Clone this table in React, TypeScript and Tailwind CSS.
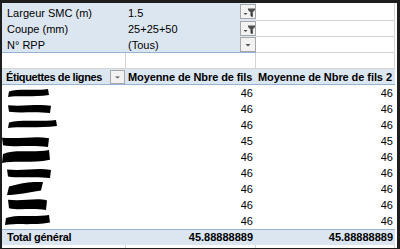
import React from "react";

const FONT = { fontFamily: "'Liberation Sans', Arial, sans-serif" };

function FilterBtn({ kind }: { kind: "filter" | "arrow" }) {
  return (
    <div className="w-[16px] h-[15px] border border-[#a6a6a6] bg-[#f2f2f2] flex items-center justify-center shrink-0">
      {kind === "filter" ? (
        <svg width="14" height="13" viewBox="0 0 14 13">
          <polygon points="2.5,8 6.5,8 4.5,10" fill="#4a4a4a" />
          <polygon points="7,3.5 14,3.5 14,5 11.5,7.5 11.5,12 9.5,11 9.5,7.5 7,5" fill="#4f4f4f" />
          <polygon points="11.5,7.5 11.5,12 10.5,11.5 10.5,8" fill="#222" />
        </svg>
      ) : (
        <svg width="14" height="13" viewBox="0 0 14 13">
          <polygon points="4.5,6 9.5,6 7,8.5" fill="#505050" />
        </svg>
      )}
    </div>
  );
}

function Blob({ x, w, y, h, v }: { x: number; w: number; y: number; h: number; v: number }) {
  const paths = [
    `M1 ${h * 0.3} C${w * 0.3} ${-h * 0.1}, ${w * 0.6} ${h * 0.25}, ${w - 1} 0 L${w} ${h * 0.75} C${w * 0.6} ${h * 1.05}, ${w * 0.3} ${h * 0.8}, 0 ${h} Z`,
    `M0 ${h * 0.15} C${w * 0.4} ${h * 0.3}, ${w * 0.7} ${-h * 0.05}, ${w} ${h * 0.2} L${w - 1} ${h} C${w * 0.6} ${h * 0.8}, ${w * 0.3} ${h * 1.05}, 1 ${h * 0.85} Z`,
    `M2 ${h * 0.35} C${w * 0.35} ${h * 0.1}, ${w * 0.7} ${-h * 0.05}, ${w} 0 L${w - 2} ${h * 0.65} C${w * 0.6} ${h * 0.8}, ${w * 0.3} ${h}, 0 ${h} Z`,
  ];
  return (
    <svg
      width={w}
      height={h}
      viewBox={`0 0 ${w} ${h}`}
      style={{ marginLeft: x, marginTop: y }}
      className="block shrink-0"
    >
      <path d={paths[v % 3]} fill="#000" />
    </svg>
  );
}

const blobs = [
  { x: 6, w: 41, y: 4, h: 8, v: 0 },
  { x: 6, w: 43, y: 3, h: 9, v: 1 },
  { x: 6, w: 49, y: 3, h: 8, v: 0 },
  { x: 0, w: 47, y: 3, h: 11, v: 1 },
  { x: 0, w: 48, y: 1, h: 13, v: 0 },
  { x: 5, w: 44, y: 3, h: 10, v: 1 },
  { x: 5, w: 36, y: 1, h: 13, v: 2 },
  { x: 6, w: 39, y: 1, h: 12, v: 1 },
  { x: 3, w: 45, y: 2, h: 10, v: 0 },
];
const vals = ["46", "46", "46", "45", "46", "46", "46", "46", "46"];

export default function App() {
  const filters = [
    { label: "Largeur SMC (m)", val: "1.5", kind: "filter" as const },
    { label: "Coupe (mm)", val: "25+25+50", kind: "filter" as const },
    { label: "N° RPP", val: "(Tous)", kind: "arrow" as const },
  ];
  return (
    <div
      className="w-[400px] h-[249px] bg-[#1e1e1e] pt-[3px] pl-[2px] pr-[3px] pb-[1px] overflow-hidden text-[11px] leading-[11px] text-black"
      style={FONT}
    >
      <div className="bg-white w-[395px] h-[245px] flex flex-col">
        {/* filter rows */}
        {filters.map((r, i) => {
          const last = i === 2;
          const h = i === 0 ? "h-[18px]" : "h-[16px]";
          const pb = last ? "pb-[1px]" : "pb-[2px]";
          return (
            <div key={i} className={`flex ${h}`}>
              <div
                className={`w-[124px] bg-[#dce6f1] flex items-end pl-[5px] ${pb} ${last ? "border-b border-[#95b3d7]" : ""}`}
              >
                <span className="whitespace-nowrap">{r.label}</span>
              </div>
              <div
                className={`w-[130px] bg-[#dce6f1] flex justify-between ${last ? "border-b border-[#95b3d7]" : ""}`}
              >
                <div className={`flex items-end pl-[2px] ${pb}`}>
                  <span className="whitespace-nowrap">{r.val}</span>
                </div>
                <div className={i === 0 ? "mt-[1px]" : ""}>
                  <FilterBtn kind={r.kind} />
                </div>
              </div>
              <div className="w-[139px] border-b border-r border-[#d4d4d4]" />
              <div className="w-[2px]" />
            </div>
          );
        })}
        {/* empty row */}
        <div className="flex h-[16px]">
          <div className="w-[124px] border-b border-r border-[#d4d4d4]" />
          <div className="w-[130px] border-b border-r border-[#d4d4d4]" />
          <div className="w-[139px] border-b border-r border-[#d4d4d4]" />
          <div className="w-[2px]" />
        </div>
        {/* header */}
        <div className="flex h-[16px] font-bold">
          <div className="w-[124px] bg-[#dce6f1] border-b border-[#95b3d7] flex justify-between pl-[4px] pr-[1px]">
            <div className="flex items-end pb-[1px]">
              <span className="whitespace-nowrap tracking-[-0.4px]">Étiquettes de lignes</span>
            </div>
            <div className="mt-[1px] w-[15px] h-[14px] border border-[#a6a6a6] bg-[#f2f2f2] flex items-center justify-center">
              <svg width="9" height="5" viewBox="0 0 9 5">
                <polygon points="2,1.5 7,1.5 4.5,3.5" fill="#555" />
              </svg>
            </div>
          </div>
          <div className="w-[130px] bg-[#dce6f1] border-b border-[#95b3d7] flex items-end pb-[1px] pl-[2px]">
            <span className="whitespace-nowrap tracking-[-0.1px]">Moyenne de Nbre de fils</span>
          </div>
          <div className="w-[139px] bg-[#dce6f1] border-b border-[#95b3d7] flex items-end pb-[1px] pl-[2px]">
            <span className="whitespace-nowrap tracking-[-0.07px]">Moyenne de Nbre de fils 2</span>
          </div>
          <div className="w-[2px]" />
        </div>
        {/* data rows */}
        {vals.map((v, i) => (
          <div key={i} className="flex h-[16px]">
            <div className="w-[124px] flex items-start">
              <Blob {...blobs[i]} />
            </div>
            <div className="w-[130px] flex items-end justify-end pb-[2px] pr-[3px]">
              <span>{v}</span>
            </div>
            <div className="w-[139px] flex items-end justify-end pb-[2px] pr-[2px]">
              <span>{v}</span>
            </div>
            <div className="w-[2px]" />
          </div>
        ))}
        {/* total */}
        <div className="flex h-[16px] font-bold">
          <div className="w-[124px] bg-[#dce6f1] border-t border-[#95b3d7] flex items-end pb-[2px] pl-[5px]">
            <span className="whitespace-nowrap tracking-[-0.25px]">Total général</span>
          </div>
          <div className="w-[130px] bg-[#dce6f1] border-t border-[#95b3d7] flex items-end justify-end pb-[2px] pr-[3px]">
            <span>45.88888889</span>
          </div>
          <div className="w-[139px] bg-[#dce6f1] border-t border-[#95b3d7] flex items-end justify-end pb-[2px] pr-[2px]">
            <span>45.88888889</span>
          </div>
          <div className="w-[2px]" />
        </div>
        {/* partial row */}
        <div className="flex h-[3px]">
          <div className="w-[124px] border-r border-[#d4d4d4]" />
          <div className="w-[130px] border-r border-[#d4d4d4]" />
          <div className="w-[139px] border-r border-[#d4d4d4]" />
          <div className="w-[2px]" />
        </div>
      </div>
    </div>
  );
}
